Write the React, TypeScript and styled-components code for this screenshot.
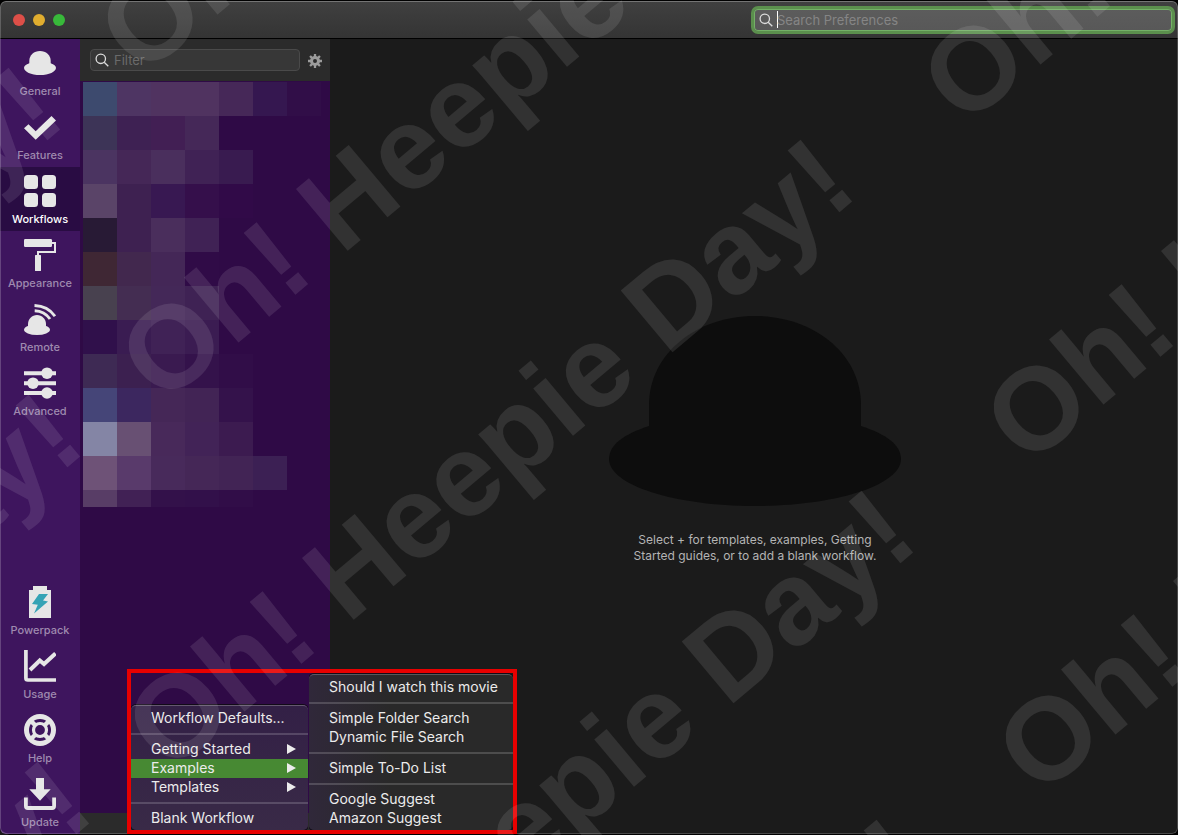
import React from 'react';
import styled, { createGlobalStyle } from 'styled-components';

const GlobalStyle = createGlobalStyle`
  *, *::before, *::after { box-sizing: border-box; }
  body { margin: 0; background: #000; }
  button, input { font: inherit; }
  ul { list-style: none; margin: 0; padding: 0; }
`;

const Page = styled.div`
  position: relative;
  display: flex;
  flex-direction: column;
  min-height: 100vh;
  padding: 1px 0;
  overflow: hidden;
  background: #000;
  color: #e6e6e6;
  font-family: Inter, 'Liberation Sans', sans-serif;
  font-size: 13px;
`;

const Window = styled.div`
  position: relative;
  flex: 1;
  display: flex;
  flex-direction: column;
  border-radius: 6px;
  overflow: hidden;
  &::after {
    content: '';
    position: absolute;
    inset: 0;
    border: 1px solid rgba(255, 255, 255, 0.2);
    border-top-color: #747474;
    border-radius: 6px;
    pointer-events: none;
  }
`;

const TitleBar = styled.header`
  display: flex;
  align-items: center;
  justify-content: space-between;
  height: 38px;
  padding: 0 3px 0 13px;
  border-bottom: 1px solid #000;
  background: linear-gradient(#404040, #343434);
`;

const Lights = styled.div`
  display: flex;
  gap: 8px;
`;

const Light = styled.button<{ $color: string }>`
  width: 12px;
  height: 12px;
  padding: 0;
  border: 0;
  border-radius: 50%;
  background: ${(p) => p.$color};
`;

const PrefSearch = styled.label`
  display: flex;
  align-items: center;
  gap: 4px;
  width: 424px;
  height: 28px;
  padding: 0 5px;
  border: 3px solid #5b8f4d;
  border-radius: 7px;
  box-shadow: inset 0 0 0 1px #74b067;
  background: linear-gradient(#5c5c5c, #585858);
`;

const Caret = styled.span`
  width: 1px;
  height: 17px;
  margin-right: -5px;
  background: #fff;
`;

const TextInput = styled.input<{ $hint: string }>`
  flex: 1;
  min-width: 0;
  padding: 0;
  border: 0;
  outline: 0;
  background: transparent;
  color: #eee;
  line-height: 16px;
  &::placeholder { color: ${(p) => p.$hint}; opacity: 1; }
`;

const Body = styled.div`
  flex: 1;
  display: flex;
`;

const Sidebar = styled.nav`
  display: flex;
  flex-direction: column;
  justify-content: space-between;
  width: 80px;
  flex: none;
  background: #3e155e;
`;

const NavItem = styled.button<{ $active?: boolean }>`
  display: flex;
  flex-direction: column;
  align-items: center;
  gap: 5px;
  width: 100%;
  height: 64px;
  padding: 8px 0 0;
  border: 0;
  background: ${(p) => (p.$active ? '#290c43' : 'transparent')};
  color: ${(p) => (p.$active ? '#fff' : '#9f8aaf')};
  font-size: 11px;
  font-weight: 500;
  line-height: 14px;
`;

const ListPane = styled.section`
  display: flex;
  flex-direction: column;
  width: 250px;
  flex: none;
  background: #2f0a46;
`;

const ListHeader = styled.div`
  display: flex;
  align-items: center;
  gap: 7px;
  height: 42px;
  padding: 0 7px 0 10px;
  background: #2b2b2b;
`;

const FilterBox = styled.label`
  flex: 1;
  min-width: 0;
  display: flex;
  align-items: center;
  gap: 5px;
  height: 22px;
  padding: 0 4px;
  border: 1px solid #4a4a4a;
  border-radius: 4px;
  background: #373737;
`;

const IconButton = styled.button`
  display: flex;
  flex: none;
  padding: 2px 0 0;
  border: 0;
  background: none;
`;

const Mosaic = styled.div`
  flex: 1;
  padding: 1px 3px;
`;

const MosaicRow = styled.div<{ $short?: boolean }>`
  display: flex;
  height: ${(p) => (p.$short ? 17 : 34)}px;
`;

const Tile = styled.span<{ $color: string }>`
  width: 34px;
  background: ${(p) => p.$color};
`;

const ListFooter = styled.div`
  height: 21px;
  background: #2b2b2b;
`;

const Main = styled.main`
  flex: 1;
  display: flex;
  flex-direction: column;
  align-items: center;
  justify-content: center;
  gap: 26px;
  padding: 7px 0 0 2px;
  background: #1b1b1b;
`;

const Hint = styled.p`
  margin: 0;
  color: #b4b4b4;
  font-size: 12px;
  line-height: 16px;
  text-align: center;
`;

const Callout = styled.div`
  position: absolute;
  left: 127px;
  bottom: 1px;
  display: flex;
  align-items: flex-end;
  gap: 1px;
  border: 4px solid #e80000;
`;

const Menu = styled.ul<{ $sub?: boolean }>`
  width: ${(p) => (p.$sub ? 204 : 177)}px;
  margin-top: ${(p) => (p.$sub ? 1 : 0)}px;
  padding: 3px 0 2px;
  border-top: 1px solid rgba(255, 255, 255, 0.22);
  border-radius: 5px;
  box-shadow: 0 0 0 1px #120a18;
  background: ${(p) =>
    p.$sub
      ? 'linear-gradient(90deg, #30283a, #292929 40%)'
      : 'linear-gradient(#332046, #392a47)'};
  clip-path: inset(-1px 0 0 0);
`;

const MenuItem = styled.button<{ $active?: boolean }>`
  display: flex;
  align-items: center;
  justify-content: space-between;
  width: 100%;
  height: 19px;
  padding: 0 12px 2px 20px;
  border: 0;
  background: ${(p) => (p.$active ? '#478933' : 'transparent')};
  color: #ececec;
  font-size: 14px;
  line-height: 17px;
`;

const Divider = styled.li`
  height: 2px;
  margin: 5px 0;
  background: rgba(255, 255, 255, 0.17);
`;

const WatermarkLayer = styled.div`
  position: absolute;
  inset: 0;
  overflow: hidden;
  pointer-events: none;
`;

const Watermark = styled.span<{ $x: number; $y: number }>`
  position: absolute;
  left: ${(p) => p.$x}px;
  top: ${(p) => p.$y}px;
  margin: -59px 0 0 -46px;
  transform: rotate(-40deg);
  transform-origin: 46px 59px;
  color: rgba(255, 255, 255, 0.1);
  font: bold 117px/117px 'Liberation Sans', sans-serif;
  white-space: nowrap;
`;

const marks = [
  [-614, 643], [-594, 970], [-585, 1337],
  [151, 18], [172, 346], [178, 715], [239, 1066], [254, 1395],
  [974, 68], [1037, 408], [1049, 738],
];

const tiles = [
  ['#3d4a6e', '#4e3563', '#503360', '#503360', '#462858', '#351750', '#310e48'],
  ['#3d3457', '#3e2153', '#421f54', '#452858'],
  ['#4b3461', '#452757', '#4a2f5d', '#402255', '#391b50'],
  ['#5a4468', '#3e2151', '#381852', '#350f4b', '#310a48'],
  ['#281a35', '#3e2151', '#4a2e5c', '#402255'],
  ['#3f2734', '#42284e', '#442757', '#300b47'],
  ['#48414f', '#442d52', '#442858', '#3f2254'],
  ['#30104b', '#3a1c52', '#402256', '#3b1c52'],
  ['#3e2a54', '#3c2050', '#3a1a50', '#34124b', '#310d48'],
  ['#454578', '#3c275f', '#452757', '#422455', '#34124b'],
  ['#8485a5', '#685073', '#48295a', '#422357', '#3c1b50'],
  ['#6e5277', '#593a6b', '#482a5b', '#452757', '#422455', '#3c2054'],
  ['#583d66', '#412155', '#33114a', '#32104a', '#310d48'],
];

const Icon = ({ children }: { children: React.ReactNode }) => (
  <svg width="32" height="32" viewBox="0 0 32 32" fill="#e6e6e6" aria-hidden="true">
    {children}
  </svg>
);

const line = { fill: 'none', stroke: '#e6e6e6' };

const icons: Record<string, React.ReactNode> = {
  General: (
    <>
      <path d="M5.3 19V14C5.3 8 10 4 16 4S26.7 8 26.7 14V19Z" />
      <path d="M5.3 16.2C2 17.3 0 18.8 0 20.7 0 24.8 7 28 16 28S32 24.8 32 20.7C32 18.8 30 17.3 26.7 16.2Z" />
    </>
  ),
  Features: <path d="M0 17.3 4.5 13.2 11.7 20.2 27.5 5 32 9.5 11.7 28.8Z" />,
  Workflows: (
    <>
      <rect width="14" height="14" rx="3.5" />
      <rect x="18" width="14" height="14" rx="3.5" />
      <rect y="18" width="14" height="14" rx="3.5" />
      <rect x="18" y="18" width="14" height="14" rx="3.5" />
    </>
  ),
  Appearance: (
    <>
      <rect width="28" height="8" rx="1.3" />
      <path d="M28 4H31V13H14V17" {...line} strokeWidth="2" />
      <rect x="11" y="16" width="6" height="16" rx="0.5" />
    </>
  ),
  Remote: (
    <>
      <path d="M4 26V21C4 16.3 8 12 13 12S22 16.3 22 21V26Z" />
      <ellipse cx="13" cy="26.7" rx="13" ry="5.2" />
      <path d="M10.5 2.5Q24 3 31 13.3M10.7 7.7Q20.5 8 26 16" {...line} strokeWidth="2.9" />
    </>
  ),
  Advanced: (
    <>
      <path d="M0 6.3H32M0 16.2H32M0 26H32" {...line} strokeWidth="4" />
      <circle cx="23" cy="6.2" r="5.8" />
      <circle cx="9" cy="16.2" r="5.8" />
      <circle cx="23" cy="26" r="5.8" />
    </>
  ),
  Powerpack: (
    <>
      <path d="M9 0H23V4H27V32H5V4H9Z" />
      <path d="M15 8H24L19 14.5 24 15.5 10 27.5 13.8 18.8 8 18Z" fill="#35a3b5" />
    </>
  ),
  Usage: (
    <>
      <path d="M1.9 0V28Q1.9 30 3.9 30H32" {...line} strokeWidth="3.7" />
      <path d="M6 20 15.8 10.5 20 14 31.5 3.5" {...line} strokeWidth="4" />
    </>
  ),
  Help: (
    <>
      <circle cx="16" cy="16" r="13.5" {...line} strokeWidth="5" />
      <circle cx="16" cy="16" r="6.5" {...line} strokeWidth="3.2" />
      <path d="M6.5 6.5 11.5 11.5M25.5 6.5 20.5 11.5M6.5 25.5 11.5 20.5M25.5 25.5 20.5 20.5" {...line} strokeWidth="4.5" />
    </>
  ),
  Update: (
    <>
      <path d="M12 0H20V11.3H26.7L16 22.7 5.3 11.3H12Z" />
      <path d="M1.9 19.5V28Q1.9 30 3.9 30H28.1Q30.1 30 30.1 28V19.5" {...line} strokeWidth="3.8" />
    </>
  ),
};

const Magnifier = () => (
  <svg width="14" height="14" viewBox="0 0 14 14" fill="none" stroke="#dcdcdc" strokeWidth="1.3" aria-hidden="true">
    <circle cx="5.8" cy="5.8" r="4.7" />
    <path d="M9.2 9.2 13.3 13.3" />
  </svg>
);

const Gear = () => (
  <svg width="16" height="16" viewBox="-8 -8 16 16" fill="none" stroke="#9c9c9c" aria-hidden="true">
    <circle r="3.5" strokeWidth="3" />
    {[0, 45, 90, 135].map((a) => (
      <path key={a} d="M0 -7V-4M0 4V7" strokeWidth="2.3" transform={`rotate(${a})`} />
    ))}
  </svg>
);

const Arrow = () => (
  <svg width="9" height="10" viewBox="0 0 9 10" fill="#ececec" aria-hidden="true">
    <path d="M0 0 9 5 0 10Z" />
  </svg>
);

const NavGroup = ({ names }: { names: string[] }) => (
  <div>
    {names.map((n) => (
      <NavItem key={n} type="button" $active={n === 'Workflows'}>
        <Icon>{icons[n]}</Icon>
        <span>{n}</span>
      </NavItem>
    ))}
  </div>
);

type Entry = { label: string; more?: boolean; active?: boolean } | null;

const MenuList = ({ entries, sub }: { entries: Entry[]; sub?: boolean }) => (
  <Menu $sub={sub}>
    {entries.map((e, i) =>
      e ? (
        <li key={e.label}>
          <MenuItem type="button" $active={e.active}>
            {e.label}
            {e.more && <Arrow />}
          </MenuItem>
        </li>
      ) : (
        <Divider key={i} role="separator" />
      )
    )}
  </Menu>
);

export default function App() {
  return (
    <Page>
      <GlobalStyle />
      <Window>
        <TitleBar>
          <Lights>
            <Light type="button" aria-label="Close" $color="#dd4f48" />
            <Light type="button" aria-label="Minimize" $color="#e0ad2f" />
            <Light type="button" aria-label="Zoom" $color="#38b93a" />
          </Lights>
          <PrefSearch>
            <Magnifier />
            <Caret />
            <TextInput $hint="#858585" type="text" placeholder="Search Preferences" aria-label="Search Preferences" />
          </PrefSearch>
        </TitleBar>
        <Body>
          <Sidebar>
            <NavGroup names={['General', 'Features', 'Workflows', 'Appearance', 'Remote', 'Advanced']} />
            <NavGroup names={['Powerpack', 'Usage', 'Help', 'Update']} />
          </Sidebar>
          <ListPane>
            <ListHeader>
              <FilterBox>
                <Magnifier />
                <TextInput $hint="#6a6a6a" type="text" placeholder="Filter" aria-label="Filter" />
              </FilterBox>
              <IconButton type="button" aria-label="List options">
                <Gear />
              </IconButton>
            </ListHeader>
            <Mosaic>
              {tiles.map((row, r) => (
                <MosaicRow key={r} $short={r === tiles.length - 1}>
                  {row.map((c, i) => (
                    <Tile key={i} $color={c} />
                  ))}
                </MosaicRow>
              ))}
            </Mosaic>
            <ListFooter />
          </ListPane>
          <Main>
            <svg width="292" height="190" viewBox="0 0 292 190" fill="#0d0d0d" aria-hidden="true">
              <path d="M40 120V89C40 38 87 0 146 0S252 38 252 89V120Z" />
              <path d="M40 110C15 118 0 129 0 143 0 169 65 190 146 190S292 169 292 143C292 129 277 118 252 110Z" />
            </svg>
            <Hint>
              Select + for templates, examples, Getting
              <br />
              Started guides, or to add a blank workflow.
            </Hint>
          </Main>
        </Body>
      </Window>
      <Callout>
        <MenuList
          entries={[
            { label: 'Workflow Defaults...' },
            null,
            { label: 'Getting Started', more: true },
            { label: 'Examples', more: true, active: true },
            { label: 'Templates', more: true },
            null,
            { label: 'Blank Workflow' },
          ]}
        />
        <MenuList
          sub
          entries={[
            { label: 'Should I watch this movie' },
            null,
            { label: 'Simple Folder Search' },
            { label: 'Dynamic File Search' },
            null,
            { label: 'Simple To-Do List' },
            null,
            { label: 'Google Suggest' },
            { label: 'Amazon Suggest' },
          ]}
        />
      </Callout>
      <WatermarkLayer aria-hidden="true">
        {marks.map(([x, y]) => (
          <Watermark key={`${x},${y}`} $x={x} $y={y}>
            Oh! Heepie Day!
          </Watermark>
        ))}
      </WatermarkLayer>
    </Page>
  );
}
